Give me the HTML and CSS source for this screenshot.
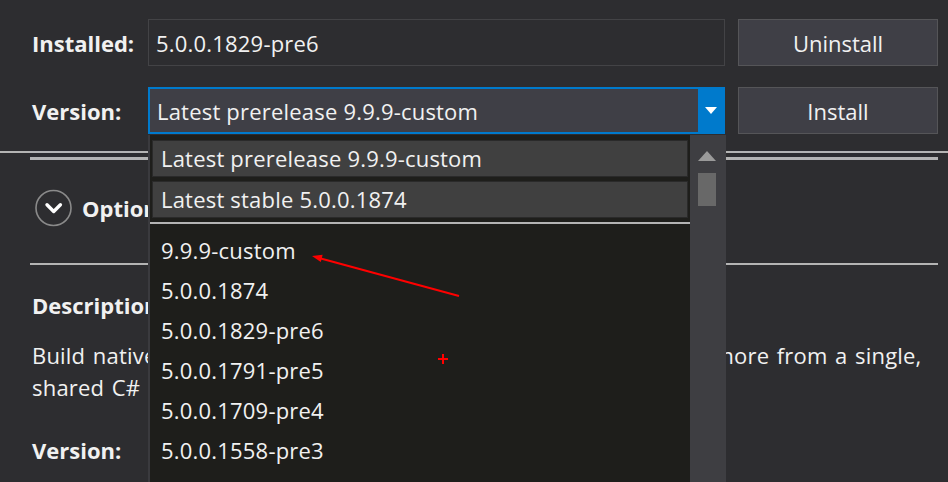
FILE: index.html
```html
<!DOCTYPE html>
<html>
<head>
<meta charset="utf-8">
<link rel="stylesheet" href="styles.css">
</head>
<body>
<div class="top">
  <div class="row">
    <div class="label">Installed:</div>
    <div class="field">5.0.0.1829-pre6</div>
    <div class="btn">Uninstall</div>
  </div>
  <div class="row row2">
    <div class="label">Version:</div>
    <div class="combo">
      <div class="combo-text">Latest prerelease 9.9.9-custom</div>
      <div class="combo-btn"><svg width="12" height="7" viewBox="0 0 12 7"><polygon points="0,0 12,0 6,7" fill="#ffffff"/></svg></div>
    </div>
    <div class="btn">Install</div>
  </div>
</div>
<div class="rule1"></div>
<div class="rule2"></div>
<div class="options">
  <svg class="opt-icon" width="38" height="38" viewBox="0 0 38 38"><circle cx="18.5" cy="19" r="17.5" fill="none" stroke="#8a8a8a" stroke-width="1.6"/><polyline points="12,15.8 18.7,22.5 25.4,15.8" fill="none" stroke="#ffffff" stroke-width="3.4" stroke-linecap="round" stroke-linejoin="round"/></svg>
  <span class="opt-text">Options</span>
</div>
<div class="rule3"></div>
<div class="content">
  <div class="heading">Description</div>
  <p class="desc">Build native UIs for iOS, Android, UWP, macOS, Tizen and many more from a single,<br>shared C# codebase</p>
  <div class="heading ver">Version:</div>
</div>

<div class="popup">
  <div class="list">
    <div class="pitem">Latest prerelease 9.9.9-custom</div>
    <div class="pitem">Latest stable 5.0.0.1874</div>
    <div class="psep"></div>
    <div class="litem">9.9.9-custom</div>
    <div class="litem">5.0.0.1874</div>
    <div class="litem">5.0.0.1829-pre6</div>
    <div class="litem">5.0.0.1791-pre5</div>
    <div class="litem">5.0.0.1709-pre4</div>
    <div class="litem">5.0.0.1558-pre3</div>
  </div>
  <div class="sbar">
    <svg class="sb-up" width="18" height="10" viewBox="0 0 18 10"><polygon points="0,10 18,10 9,0" fill="#9a9a9a"/></svg>
    <div class="sb-thumb"></div>
  </div>
</div>

<svg class="annot" width="948" height="482" viewBox="0 0 948 482">
  <line x1="459" y1="296" x2="319" y2="258" stroke="#ff0000" stroke-width="2"/>
  <polygon points="312,256 322.6,254.8 320.8,262" fill="#ff0000"/>
  <line x1="438" y1="359" x2="448" y2="359" stroke="#ff0000" stroke-width="2"/>
  <line x1="443" y1="354" x2="443" y2="364" stroke="#ff0000" stroke-width="2"/>
</svg>
</body>
</html>
```

FILE: styles.css
```css
* { box-sizing: border-box; }
html, body { margin: 0; padding: 0; }
body {
  width: 948px;
  height: 482px;
  overflow: hidden;
  position: relative;
  background: #2d2d30;
  color: #f1f1f1;
  font-family: "Open Sans", "Noto Sans", sans-serif;
  font-size: 22px;
  letter-spacing: 0.2px;
}
.top { padding: 19px 10px 0 32px; }
.row { display: flex; align-items: center; height: 47px; }
.row2 { margin-top: 21px; }
.label { width: 116px; font-weight: 700; letter-spacing: 0; }
.field {
  width: 577px; height: 47px;
  border: 1px solid #434346;
  background: #2d2d30;
  padding-left: 7px;
  display: flex; align-items: center;
}
.combo {
  width: 577px; height: 47px;
  border: 2px solid #007acc;
  background: #3f3f46;
  display: flex;
}
.combo-text { flex: 1; padding-left: 7px; display: flex; align-items: center; }
.combo-btn { width: 25px; background: #007acc; display: flex; align-items: center; justify-content: center; }
.btn {
  width: 200px; height: 47px; margin-left: 13px;
  background: #3f3f46;
  border: 1px solid #555558;
  display: flex; align-items: center; justify-content: center;
  letter-spacing: 0;
}
.rule1 { height: 2px; background: #b4b4b4; margin-top: 17px; }
.rule2 { height: 3px; background: #b4b4b4; margin: 4px 10px 0 30px; }
.options { display: flex; align-items: center; gap: 9px; padding-left: 35px; margin-top: 29px; height: 38px; }
.opt-icon { display: block; }
.opt-text { font-weight: 700; letter-spacing: 0; }
.rule3 { height: 2px; background: #b4b4b4; margin: 36px 10px 0 30px; }
.content { padding: 0 10px 0 32px; }
.heading { font-weight: 700; line-height: 28px; margin-top: 26px; letter-spacing: 0; }
.desc { margin: 20px 0 0; line-height: 32px; word-spacing: 1.6px; white-space: nowrap; }
.ver { margin-top: 33px; }

.popup {
  position: absolute;
  left: 148px; top: 135px;
  width: 578px; height: 347px;
  background: #1e1e1b;
  border-left: 2px solid #3a3a3e;
  display: flex;
}
.list { flex: 1; padding-top: 5px; }
.pitem {
  height: 37px; margin: 0 2px 4px 2px;
  background: #404040;
  border: 1px solid #2a2a2a;
  padding-left: 8px;
  line-height: 35px;
}
.psep { height: 2px; background: #b4b4b4; margin-top: 1px; }
.psep + .litem { margin-top: 6px; }
.litem { height: 40px; line-height: 40px; padding-left: 11px; }
.sbar { width: 36px; background: #3e3e42; padding: 16px 0 0 8px; }
.sb-up { display: block; }
.sb-thumb { width: 18px; height: 33px; background: #686868; margin-top: 12px; }
.annot { position: absolute; left: 0; top: 0; pointer-events: none; }
```
